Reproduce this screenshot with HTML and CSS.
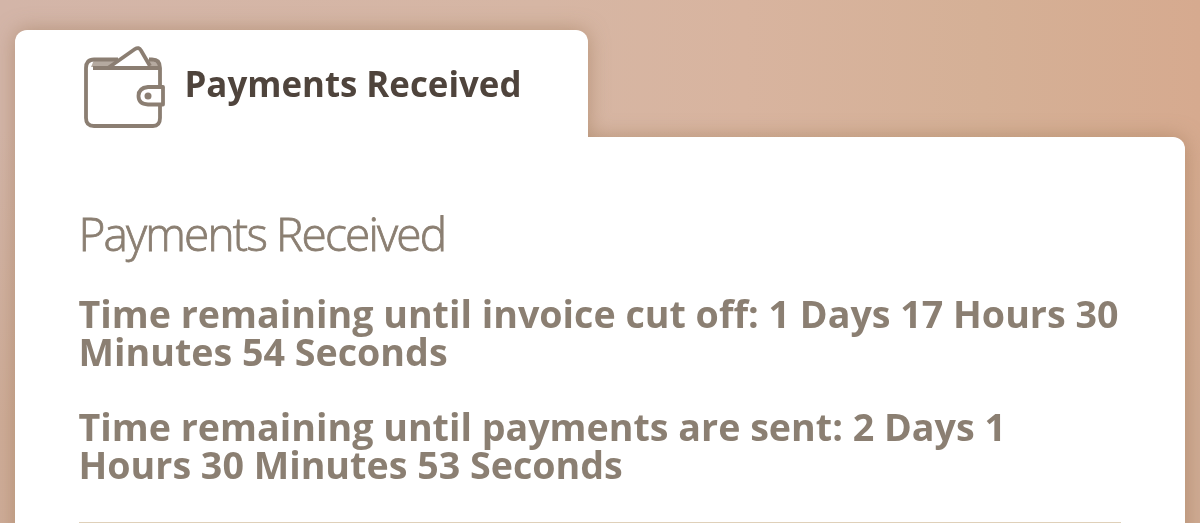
FILE: index.html
```
<!DOCTYPE html>
<html lang="en">
<head>
<meta charset="utf-8">
<title>Payments Received</title>
<link rel="stylesheet" href="styles.css">
</head>
<body>
<main class="page">
  <div class="card">
    <div class="tab">
      <svg class="wallet" viewBox="0 0 86 88" fill="none" stroke="#8b7e72" stroke-width="3.800" stroke-linejoin="round">
        <path d="M12 16H36L28 23H9Z" fill="#b5aaa0" stroke="none"/>
        <path d="M66 15L77 20V24H69Z" fill="#b5aaa0" stroke="none"/>
        <path d="M36 15.500H12Q4 15.500 4 24V74Q4 82 12 82H71Q78 82 78 74V61M78 44V24Q78 15.500 70 15.500H67"/>
        <path d="M11 24H77"/>
        <path d="M26 24L53 5Q57 2.500 59 6.500L68 22"/>
        <path d="M81 43H66Q56.500 44 56.500 52T66 60.500H81Z"/>
        <circle cx="66" cy="52" r="3.500" fill="#8b7e72" stroke="none"/>
      </svg>
      <span class="tab-title">Payments Received</span>
    </div>
    <section class="panel">
      <h1 class="heading">Payments Received</h1>
      <p class="countdown">Time remaining until invoice cut off: 1 Days 17 Hours 30 Minutes 54 Seconds</p>
      <p class="countdown">Time remaining until payments are sent: 2 Days 1 Hours 30 Minutes 53 Seconds</p>
      <hr class="divider">
    </section>
  </div>
</main>
</body>
</html>
```
FILE: styles.css
```
* { box-sizing: border-box; }
body { margin: 0; font-family: "Open Sans", "Noto Sans", sans-serif; }
.page {
  height: 523px;
  padding: 30px 15px 0;
  overflow: hidden;
  background:
    linear-gradient(180deg, rgba(205,170,148,0) 25%, rgba(205,170,148,.8) 80%),
    linear-gradient(90deg, #d3b5a8 0%, #d6b6a4 45%, #d8b49f 62%, #d5b096 82%, #d6aa8f 100%);
}
/* The tab and the panel cast one shared shadow */
.card { filter: drop-shadow(0 0 10px rgba(150,112,75,.5)); }
.tab, .panel { background: #fff; }
.tab {
  display: flex;
  align-items: center;
  width: 573px;
  height: 107px;
  padding: 0 0 0 67px;
  border-radius: 12px 12px 0 0;
}
.wallet { width: 86px; height: 88px; margin-top: 8px; flex: none; }
.tab-title {
  margin-left: 16.500px;
  font-size: 34.850px;
  font-weight: 700;
  line-height: 48px;
  color: #4f443c;
  white-space: nowrap;
}
.panel {
  width: 1170px;
  height: 500px;
  padding: 66px 64px 0 63.500px;
  border-radius: 0 12px 0 0;
}
.heading {
  margin: 0 0 32px;
  font-size: 46px;
  font-weight: 300;
  line-height: 60px;
  letter-spacing: -1.850px;
  color: #8b7f72;
  -webkit-text-stroke: .8px #8b7f72;
}
.countdown {
  margin: 0 0 37.500px;
  font-size: 37.640px;
  font-weight: 700;
  line-height: 37.700px;
  color: #8b7f72;
}
.divider { margin: 38.500px 0 0; border: 0; height: 2px; background: #dfd0b9; }
```
